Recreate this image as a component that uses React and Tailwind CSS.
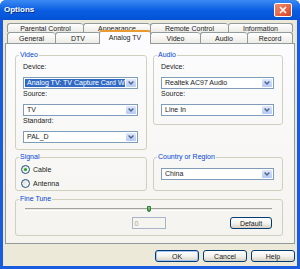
const backTabs = [
  { label: "Parental Control", width: "w-[76px]" },
  { label: "Appearance", width: "w-[67px]" },
  { label: "Remote Control", width: "w-[78px]" },
  { label: "Information", width: "w-[65px]" },
];

const frontTabs = [
  { label: "General", width: "w-[48px]" },
  { label: "DTV", width: "w-[45px]" },
  { label: "Analog TV", width: "w-[52px]", active: true },
  { label: "Video", width: "w-[50px]" },
  { label: "Audio", width: "w-[47px]" },
  { label: "Record", width: "w-[46px]" },
];

const Chevron = () => (
  <svg width="6" height="4" viewBox="0 0 6 4">
    <path d="M0.6 0.6 L3 3 L5.4 0.6" fill="none" stroke="#4D6185" strokeWidth="1.4" />
  </svg>
);

const Select = ({ value, selected = false }) => (
  <div className="flex h-[12px] min-w-0 border border-[#7F9DB9] bg-white p-[1px]">
    <div
      className={`min-w-0 flex-1 overflow-hidden whitespace-nowrap pl-[2px] text-[7px] leading-[8px] ${
        selected ? "bg-[#316AC5] text-white" : "text-[#1a1a1a]"
      }`}
    >
      {value}
    </div>
    <div className="ml-[1px] flex w-[10px] items-center justify-center rounded-[1px] bg-gradient-to-b from-[#DFE8FD] to-[#B4C8F6]">
      <Chevron />
    </div>
  </div>
);

const Group = ({ title, className = "", innerClass = "", children }) => (
  <fieldset className={`min-w-0 rounded-[3px] border border-[#D0D0BF] ${className}`}>
    <legend className="ml-[3px] px-[1px] text-[7px] leading-[8px] text-[#0046D5]">{title}</legend>
    <div className={innerClass}>{children}</div>
  </fieldset>
);

const Field = ({ label, children }) => (
  <div>
    <div className="h-[10px] text-[7px] leading-[10px] text-[#1a1a1a]">{label}</div>
    <div className="mt-[5px]">{children}</div>
  </div>
);

const Radio = ({ label, checked = false }) => (
  <div className="flex h-[10px] items-center gap-[3px]">
    <span className="flex h-[9px] w-[9px] items-center justify-center rounded-full border border-[#1C5180] bg-gradient-to-br from-[#DCDBD5] to-white">
      {checked && <span className="h-[3px] w-[3px] rounded-full bg-[#21A121]" />}
    </span>
    <span className="text-[7px] leading-none text-[#1a1a1a]">{label}</span>
  </div>
);

const XpButton = ({ children, width, primary = false }) => (
  <div
    className={`flex h-[12px] items-center justify-center rounded-[3px] border border-[#003C74] bg-gradient-to-b from-white via-[#F4F3EE] to-[#D8D2C6] text-[7px] leading-none text-[#1a1a1a] ${width} ${
      primary ? "shadow-[inset_0_0_0_1px_#A9C4F4]" : ""
    }`}
  >
    {children}
  </div>
);

export default function App() {
  return (
    <div className="flex h-[269px] w-[300px] flex-col overflow-hidden rounded-t-[6px] bg-[#1A5CE0] font-['Liberation_Sans',Arial,sans-serif]">
      {/* title bar */}
      <div className="flex h-[20px] items-center justify-between bg-gradient-to-b from-[#3A8AF4] via-[#0A5EE2] to-[#0452D6] pl-[4px] pr-[8px]">
        <span className="text-[8px] font-bold leading-none text-white [text-shadow:1px_1px_0_#0B2F8A]">
          Options
        </span>
        <div className="flex h-[14px] w-[18px] items-center justify-center rounded-[2px] border border-white bg-gradient-to-br from-[#F08A6C] to-[#D9431F]">
          <svg width="8" height="8" viewBox="0 0 8 8">
            <path d="M1 1 L7 7 M7 1 L1 7" stroke="white" strokeWidth="1.6" />
          </svg>
        </div>
      </div>

      {/* client area */}
      <div className="mx-[3px] mb-[3px] flex flex-1 flex-col bg-[#ECE9D8] px-[2px] pt-[3px]">
        <div className="ml-[2px] flex h-[9px]">
          {backTabs.map((tab, index) => (
            <div
              key={tab.label}
              className={`flex items-center justify-center rounded-t-[3px] border-l border-t border-[#919B9C] bg-gradient-to-b from-white to-[#ECEBE6] text-[7px] leading-none text-[#1a1a1a] ${
                tab.width
              } ${index === backTabs.length - 1 ? "border-r" : ""}`}
            >
              {tab.label}
            </div>
          ))}
        </div>
        <div className="ml-[2px] flex h-[11px] items-end">
          {frontTabs.map((tab, index) =>
            tab.active ? (
              <div
                key={tab.label}
                className={`relative z-10 -mx-[1px] -mb-[1px] flex h-[14px] items-center justify-center rounded-t-[3px] border-x border-t-2 border-x-[#919B9C] border-t-[#E99A30] bg-[#FCFCFE] pb-[2px] text-[7px] leading-none text-[#1a1a1a] ${tab.width}`}
              >
                {tab.label}
              </div>
            ) : (
              <div
                key={tab.label}
                className={`flex h-[11px] items-center justify-center rounded-t-[3px] border-l border-t border-[#919B9C] bg-gradient-to-b from-white to-[#ECEBE6] text-[7px] leading-none text-[#1a1a1a] ${
                  tab.width
                } ${index === frontTabs.length - 1 ? "border-r" : ""}`}
              >
                {tab.label}
              </div>
            )
          )}
        </div>

        {/* tab page */}
        <div className="flex h-[201px] flex-col border border-[#919B9C] bg-gradient-to-b from-[#FCFCFE] to-[#F4F3EE] pl-[9px] pr-[11px] pt-[7px]">
          <div className="flex items-start gap-[6px]">
            <Group title="Video" className="w-[132px]" innerClass="flex flex-col pt-[3px] pl-[7px] pr-[8px] pb-[6px]">
              <Field label="Device:">
                <Select value="Analog TV: TV Capture Card WDM V" selected />
              </Field>
              <Field label="Source:">
                <Select value="TV" />
              </Field>
              <Field label="Standard:">
                <Select value="PAL_D" />
              </Field>
            </Group>
            <Group title="Audio" className="w-[130px]" innerClass="flex flex-col pt-[3px] pl-[7px] pr-[8px] pb-[8px]">
              <Field label="Device:">
                <Select value="Realtek AC97 Audio" />
              </Field>
              <Field label="Source:">
                <Select value="Line In" />
              </Field>
            </Group>
          </div>

          <div className="mt-[3px] flex items-stretch gap-[6px]">
            <Group title="Signal" className="w-[132px]" innerClass="flex flex-col gap-[4px] pt-[3px] pl-[5px] pb-[1px]">
              <Radio label="Cable" checked />
              <Radio label="Antenna" />
            </Group>
            <Group title="Country or Region" className="w-[130px]" innerClass="pt-[7px] pl-[7px] pr-[8px] pb-[10px]">
              <Select value="China" />
            </Group>
          </div>

          <Group title="Fine Tune" className="mt-[4px]" innerClass="pt-[2px] pl-[9px] pr-[10px] pb-[6px]">
            <div className="relative flex h-[8px] items-center">
              <div className="h-[3px] w-full border-y border-t-[#A2A19B] border-b-white bg-[#E9E8E2]" />
              <div className="absolute left-1/2 top-[1px] h-[6px] w-[4px] -translate-x-1/2 rounded-b-[2px] border border-[#2F7A3A] bg-gradient-to-b from-[#8FD08F] to-[#3E9B45]" />
            </div>
            <div className="mt-[4px] grid grid-cols-[1fr_34px_1fr] items-center">
              <div />
              <div className="flex h-[12px] items-center border border-[#A7B5CA] bg-[#F5F4EF] pl-[2px] text-[7px] leading-none text-[#ACA899]">
                0
              </div>
              <div className="justify-self-end">
                <XpButton width="w-[42px]">Default</XpButton>
              </div>
            </div>
          </Group>
        </div>

        {/* dialog buttons */}
        <div className="mt-[6px] flex justify-end gap-[4px]">
          <XpButton width="w-[44px]" primary>
            OK
          </XpButton>
          <XpButton width="w-[44px]">Cancel</XpButton>
          <XpButton width="w-[44px]">Help</XpButton>
        </div>
      </div>
    </div>
  );
}
